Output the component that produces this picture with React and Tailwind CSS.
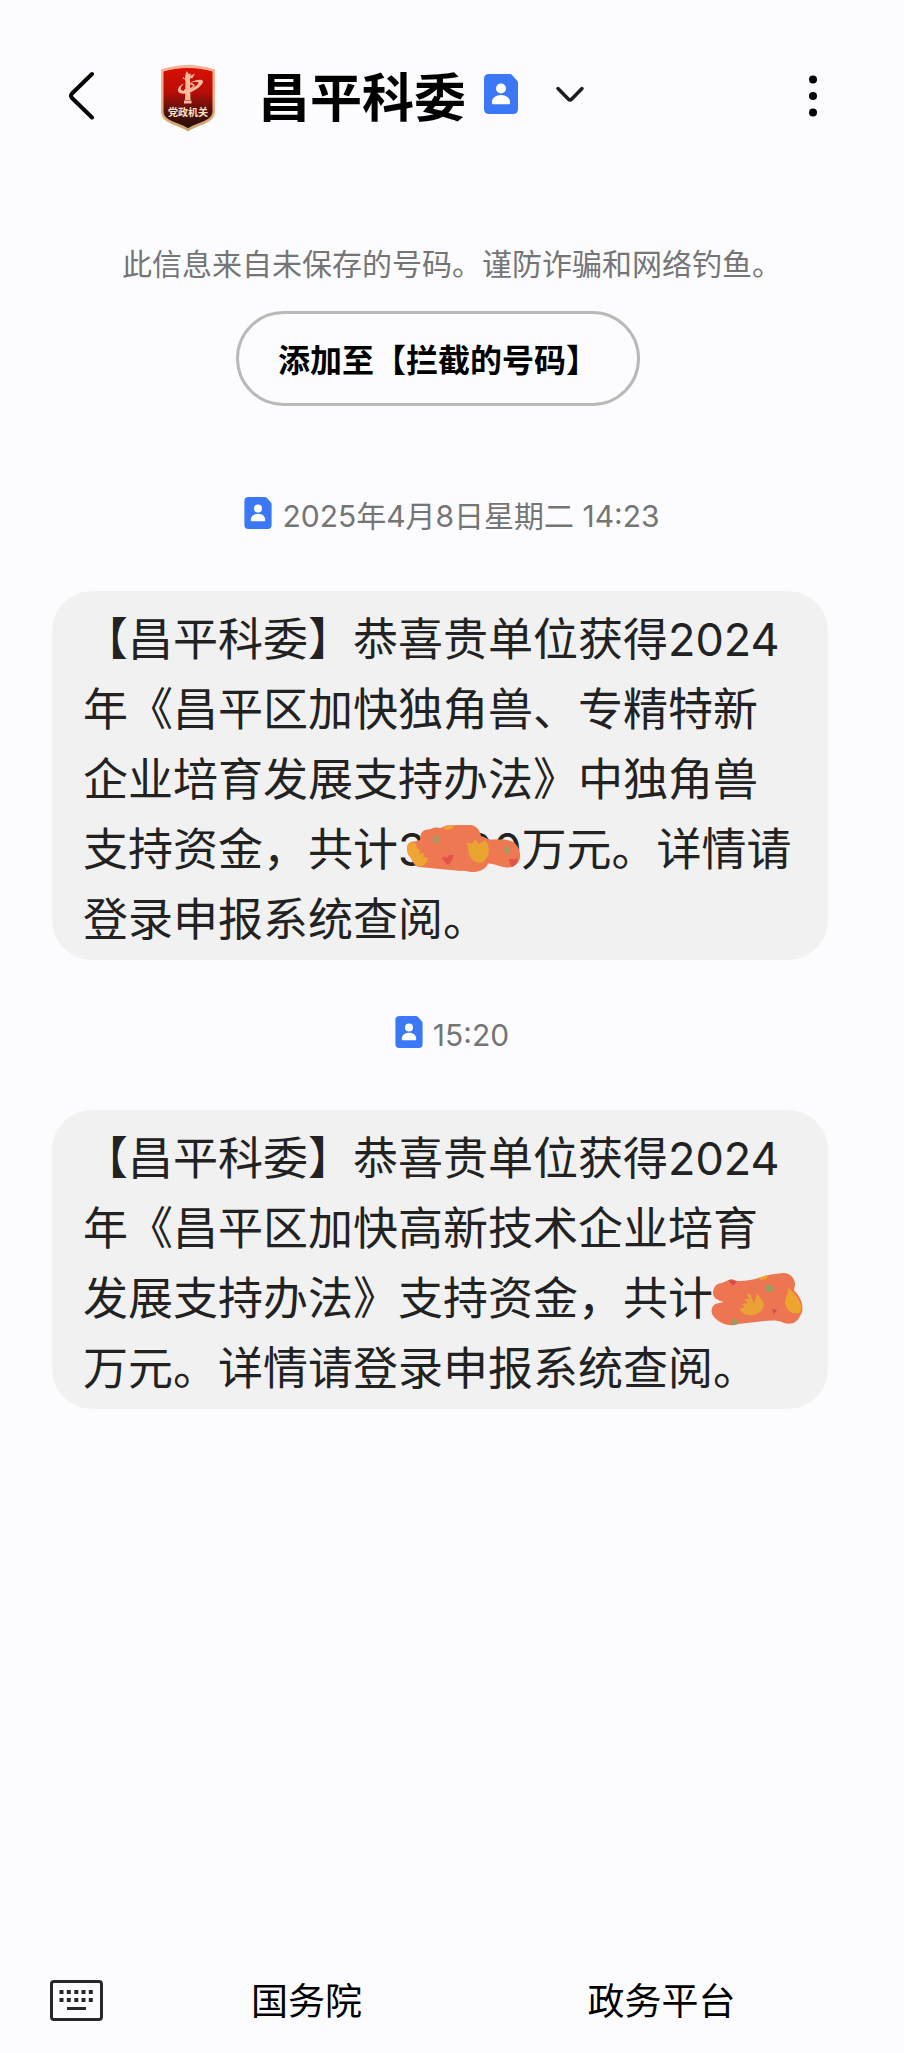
const notice = "此信息来自未保存的号码。谨防诈骗和网络钓鱼。";

function BackIcon() {
  return (
    <svg viewBox="0 0 28 50" className="h-[50px] w-7" fill="none" stroke="#050505" strokeWidth="4" strokeLinecap="round" strokeLinejoin="round">
      <path d="M24 3 4 22.500Q2 24.700 4 27L24 46.500" />
    </svg>
  );
}

function ShieldLogo() {
  return (
    <svg viewBox="0 0 56 68" className="h-[68px] w-14" role="img" aria-label="党政机关">
      <defs>
        <linearGradient id="shieldFill" x1="0" y1="0" x2="0" y2="1">
          <stop offset="0" stopColor="#d90f04" />
          <stop offset="0.4" stopColor="#b80d08" />
          <stop offset="0.7" stopColor="#5a0f0a" />
          <stop offset="1" stopColor="#241008" />
        </linearGradient>
        <linearGradient id="shieldEdge" x1="0" y1="0" x2="0" y2="1">
          <stop offset="0" stopColor="#f9b193" />
          <stop offset="0.6" stopColor="#e8b083" />
          <stop offset="1" stopColor="#c9a56b" />
        </linearGradient>
      </defs>
      <path
        d="M28 1C37 1 46 2.500 55 5.500V48C55 56 46 59.500 39 62C34 64 31 65.500 28 67.500C25 65.500 22 64 17 62C10 59.500 1 56 1 48V5.500C10 2.500 19 1 28 1Z"
        fill="url(#shieldEdge)"
      />
      <path
        d="M28 4C37 4 45 5.200 52.500 7.500V47.500C52.500 54 45 56.800 38 59.500C33.500 61.200 31 62.500 28 64.300C25 62.500 22.500 61.200 18 59.500C11 56.800 3.500 54 3.500 47.500V7.500C11 5.200 19 4 28 4Z"
        fill="url(#shieldFill)"
      />
      <path d="M25.500 17H30L30.500 36H25Z M24 36.500H31.500V39.500H24Z M23.500 13 25 15 25.500 10 27 7 28.500 10 31 9.500 30 12 35 9.500 32.500 14 30 14.500V17H25L25 15.500 22.500 14.500Z" fill="#f9bb9b" />
      <path d="M29 19C36 15.500 42 15 43 17C44 20 36 27 28 29C20 31 16.500 28 18.500 24C19.500 22 21.500 20.500 24.500 19.500C20.500 22.500 19.500 25.500 22.500 26.500C28 28 37.500 22 38.500 19C39 17.500 34 18 29 19Z" fill="#f9bb9b" />
      <path d="M29 19.500C33 20 35 21 33 23C31 25 28 26 24 26.500" fill="none" stroke="#f9bb9b" strokeWidth="1.500" />
      <text x="28" y="52" textAnchor="middle" fontSize="10" fontWeight="700" fill="#ffe4c6">
        党政机关
      </text>
    </svg>
  );
}

function ContactBadge({ className }) {
  return (
    <svg viewBox="0 0 34 40" className={className} aria-hidden="true">
      <path d="M5 0H25.500Q27 0 28 1L33 6.500Q34 7.500 34 9V35Q34 40 29 40H5Q0 40 0 35V5Q0 0 5 0Z" fill="#3a78f6" />
      <circle cx="17" cy="14.500" r="5" fill="#fff" />
      <path d="M8 29.500V28C8 24 12 21 17 21S26 24 26 28V29.500Q26 30.300 25 30.300H9Q8 30.300 8 29.500Z" fill="#fff" />
    </svg>
  );
}

function KeyboardIcon() {
  const columns = [11.5, 18.8, 26.3, 33.5, 40.8];
  return (
    <svg viewBox="0 0 53 41" className="h-[41px] w-[53px]" fill="#26272b">
      <rect x="1.500" y="1.500" width="50" height="38" rx="2.500" fill="none" stroke="#26272b" strokeWidth="3" />
      {columns.map((cx) => (
        <g key={cx}>
          <rect x={cx - 2} y="10" width="4" height="4" />
          <rect x={cx - 2} y="18" width="4" height="4" />
        </g>
      ))}
      <rect x="17" y="27" width="19" height="3" />
    </svg>
  );
}

function LongScribble() {
  return (
    <svg viewBox="0 0 114 48" className="absolute top-0.5 left-2 h-12 w-[114px]" aria-hidden="true">
      <path
        d="M1 24C1 19 5 17 9 17.500L14 16C14 9 17 5 23 5.500C28 3 31 3 35 4C40 0 47 2 52 1H64C70 1 74 6 75 12C79 13 82 15 83 15.500H98C107 16 113 21 114 30C115 39 108 44 101 43.500C94 43 90 40 82 39.500C80 45 75 47 69 48C64 49 60 46 55 47L13 43C8 42 7 38 5 34C2 31 1 28 1 24Z"
        fill="#ed7852"
      />
      <path d="M1 24C1 20 4 18 8 18.500C11 20 10 24 14 26L13 30 18 29 17 33 22 34C21 40 17 43 12 42C8 41 7 37 5 34C2 31 1 28 1 24Z" fill="#eea533" />
      <path d="M61 18 66 20 69 15 73 20 79 16C84 21 84 30 80 35C77 40 70 40 66 35C61 30 63 24 61 18Z" fill="#e9a431" />
      <path d="M38 3 48 1 46 5 39 6Z" fill="#eea533" />
      <path d="M30 11 34 15 30 20 26 15Z M101 22 105 26 101 31 97 26Z" fill="#a79b5f" />
      <path d="M36 34C38 32 40 33 41 34C42 31 45 30 47 31C48 35 45 38 42 41C40 39 37 37 36 34Z M103 36C104 34 107 35 108 36C109 34 111 34 112 35C112 38 110 41 106 43C105 41 103 39 103 36Z" fill="#e3534c" />
    </svg>
  );
}

function ShortScribble() {
  return (
    <svg viewBox="0 0 92 54" className="absolute -top-0.5 -left-0.5 h-[54px] w-[92px]" aria-hidden="true">
      <path
        d="M2 20C2 14 6 10 11 10L20 6 26 8C40 8 50 4 60 1.500L72 0C80 0 84 6 84 12L83 17 87 22C92 29 93 38 89 43C86 50 80 52 73 50C65 46 55 48 45 49L27 51C20 54 10 51 5 46C0 42 -1 36 3 32C5 30 9 30 13 29C6 27 2 25 2 20Z"
        fill="#ed7551"
      />
      <path d="M36 20 40 22 43 31 46 20 50 26C57 32 50 41 42 42C36 43 31 40 28 36L34 34 31 31 37 30 33 26 38 26Z" fill="#eaa236" />
      <path d="M77 15 83 20 86 24C91 31 92 36 88 40C81 42 75 37 74 30C74 24 78 21 77 15Z M47 5 56 2 56 6 50 7Z" fill="#eea52f" />
      <path d="M58 11 62 14 61 19 56 19 54 14Z M23 45 27 48 25 52 20 51Z" fill="#8fa160" />
      <path d="M17 7 26 8 22 13Z M61 36 66 37 63 41Z" fill="#d9494a" />
    </svg>
  );
}

function TimeStamp({ children, className }) {
  return (
    <div className={`flex h-10 items-center justify-center gap-2.5 text-[30px] text-[#757575] ${className}`}>
      <ContactBadge className="mb-1.5 h-8 w-7" />
      <time>{children}</time>
    </div>
  );
}

function Bubble({ children }) {
  return (
    <article className="mt-[55px] mr-[76px] ml-[52px] rounded-[40px] bg-[#f1f1f1] px-[31px] pt-[14px] pb-[5px] text-[45px] leading-[70px] text-[#222]">
      <p>{children}</p>
    </article>
  );
}

export default function App() {
  return (
    <div lang="zh-CN" className="flex min-h-screen flex-col bg-[#fcfcfe] font-['Inter','Noto_Sans_CJK_SC',sans-serif] text-black">
      <header className="flex items-center pt-16 pr-[81px] pl-[68px]">
        <button type="button" aria-label="返回" className="mb-1">
          <BackIcon />
        </button>
        <div className="ml-16">
          <ShieldLogo />
        </div>
        <h1 className="ml-[42px] pt-0.5 text-[52px] leading-[66px] font-bold">昌平科委</h1>
        <ContactBadge className="mb-2 ml-[18px] h-10 w-[34px]" />
        <button type="button" aria-label="展开" className="mb-2 ml-9">
          <svg viewBox="0 0 32 20" className="h-5 w-8" fill="none" stroke="#1c1c1e" strokeWidth="3.500" strokeLinecap="round" strokeLinejoin="round">
            <path d="M4 4.500 14.500 15.200Q16 16.600 17.500 15.200L28 4.500" />
          </svg>
        </button>
        <button type="button" aria-label="更多" className="mb-1 ml-auto">
          <svg viewBox="0 0 20 44" className="h-11 w-5" fill="#050505">
            <circle cx="10" cy="5.500" r="4" />
            <circle cx="10" cy="22" r="4" />
            <circle cx="10" cy="38.500" r="4" />
          </svg>
        </button>
      </header>

      <main>
        <p className="mt-28 text-center text-[30px] leading-10 text-[#757575]">{notice}</p>
        <div className="mt-[27px] mr-7 flex justify-center">
          <button type="button" className="h-[95px] rounded-full border-3 border-[#b9b9b9] px-[39px] pt-1 text-[32px] font-bold">
            添加至【拦截的号码】
          </button>
        </div>

        <TimeStamp className="mt-[90px]">2025年4月8日星期二 14:23</TimeStamp>
        <Bubble>
          【昌平科委】恭喜贵单位获得2024年《昌平区加快独角兽、专精特新企业培育发展支持办法》中独角兽支持资金，共计
          <span className="relative whitespace-nowrap">
            3<span className="ml-[39px]">00</span>
            <LongScribble />
          </span>
          万元。详情请登录申报系统查阅。
        </Bubble>

        <TimeStamp className="mt-[55px]">15:20</TimeStamp>
        <Bubble>
          【昌平科委】恭喜贵单位获得2024年《昌平区加快高新技术企业培育发展支持办法》支持资金，共计
          <span className="relative inline-block h-14 w-20 align-middle">
            <ShortScribble />
          </span>
          万元。详情请登录申报系统查阅。
        </Bubble>
      </main>

      <footer className="mt-auto flex items-center pr-[65px] pb-6 pl-[50px] text-[37px] leading-[54px]">
        <button type="button" aria-label="键盘" className="mr-[26px] mb-1">
          <KeyboardIcon />
        </button>
        <nav className="flex flex-1">
          <button type="button" className="flex-1">
            国务院
          </button>
          <button type="button" className="flex-1">
            政务平台
          </button>
        </nav>
      </footer>
    </div>
  );
}
